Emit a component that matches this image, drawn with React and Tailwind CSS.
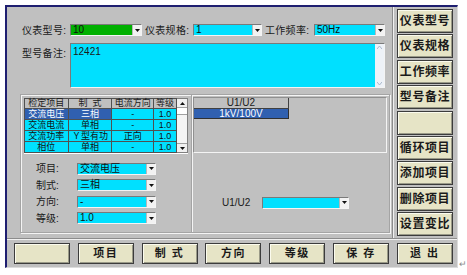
import React from 'react'

function DropArrow() {
  return (
    <div className="w-[9px] h-full bg-[#f2f2f2] border-l border-[#b8b8b8] flex items-center justify-center">
      <svg width="5" height="3" viewBox="0 0 5 3"><path d="M0 0h5L2.5 3z" fill="#111" /></svg>
    </div>
  )
}

function Select({ className, value }) {
  return (
    <div className={`flex h-[12px] border border-t-[#7a7a7a] border-l-[#7a7a7a] border-r-[#f4f4f4] border-b-[#f4f4f4] ${className}`}>
      <div className="flex-1 flex items-center pl-[2px] text-[10px] leading-none text-[#101010]">{value}</div>
      <DropArrow />
    </div>
  )
}

function Btn({ children, className = '' }) {
  return (
    <div className={`w-[56px] flex items-center justify-center bg-[#e6e4c6] border border-[#3c3c3c] shadow-[inset_1px_1px_0_#fbfbee,inset_-1px_-1px_0_#9a9a88] font-bold text-[#1a1a1a] whitespace-pre ${className}`}>
      {children}
    </div>
  )
}

const rows = [
  { item: '交流电压', mode: '三相', dir: '-', grade: '1.0', sel: true },
  { item: '交流电流', mode: '单相', dir: '-', grade: '1.0' },
  { item: '交流功率', mode: 'Ｙ型有功', dir: '正向', grade: '1.0' },
  { item: '相位', mode: '单相', dir: '-', grade: '1.0' },
]

const sideButtons = ['仪表型号', '仪表规格', '工作频率', '型号备注', '', '循环项目', '添加项目', '删除项目', '设置变比']
const bottomButtons = ['', '项目', '制 式', '方向', '等级', '保 存', '退 出']

export default function App() {
  return (
    <div className="relative w-[467px] h-[275px] overflow-hidden bg-white font-['Liberation_Sans','Noto_Sans_CJK_SC',sans-serif]">
      <div className="ml-[5px] mt-[5px] w-[453px] h-[263px] flex flex-col bg-[#c0c0c0] border-t-2 border-l-2 border-r border-b border-t-[#1e1e70] border-l-[#1e1e70] border-r-[#dcdcdc] border-b-[#dcdcdc]">
        <div className="flex h-[231px]">
          {/* main panel */}
          <div className="w-[385px] flex flex-col">
            <div className="flex items-center h-[12px] mt-[17px] pl-[15px] text-[10px] text-[#1a1a1a]">
              <span className="w-[48px] tracking-[0.3px]">仪表型号:</span>
              <Select className="w-[72px] bg-[#00b000]" value="10" />
              <span className="w-[48px] ml-[3px] tracking-[0.3px]">仪表规格:</span>
              <Select className="w-[69px] bg-[#00e0ff]" value="1" />
              <span className="w-[49px] ml-[3px] tracking-[0.3px]">工作频率:</span>
              <Select className="w-[71px] bg-[#00e0ff]" value="50Hz" />
            </div>

            <div className="flex mt-[7px] pl-[15px] text-[10px] text-[#1a1a1a]">
              <span className="w-[48px] pt-[3px] tracking-[0.3px]">型号备注:</span>
              <div className="flex w-[315px] h-[45px] bg-[#00e0ff] border border-t-[#7a7a7a] border-l-[#7a7a7a] border-r-[#f4f4f4] border-b-[#f4f4f4]">
                <div className="flex-1 pl-[2px] pt-[3px] text-[10px] leading-none">12421</div>
                <div className="w-[9px] h-full bg-[#eef2f8] flex flex-col justify-between items-center py-[2px]">
                  <svg width="5" height="3" viewBox="0 0 5 3"><path d="M0 3L2.5 0L5 3" fill="none" stroke="#a8b8cc" /></svg>
                  <svg width="5" height="3" viewBox="0 0 5 3"><path d="M0 0L2.5 3L5 0" fill="none" stroke="#a8b8cc" /></svg>
                </div>
              </div>
            </div>

            <div className="flex mt-[6px] ml-[13px] w-[370px] h-[139px] border border-[#a4a4a4] shadow-[inset_1px_1px_0_#f4f4f4,1px_1px_0_#f4f4f4]">
              {/* left group */}
              <div className="w-[171px] border-r border-[#a4a4a4] shadow-[1px_0_0_#f4f4f4] pl-[3px] pt-[3px]">
                <div className="flex w-[164px] border-b border-white">
                  <div className="w-[153px] text-[9px] leading-none border-t border-l border-[#505050]">
                    <div className="flex h-[10px] bg-[#c0c0c0] text-[#1a1a1a]">
                      <div className="w-[44px] flex items-center justify-center border-r border-b border-[#505050]">检定项目</div>
                      <div className="w-[44px] flex items-center justify-center border-r border-b border-[#505050] whitespace-pre">制  式</div>
                      <div className="w-[42px] flex items-center justify-center border-r border-b border-[#505050]">电流方向</div>
                      <div className="w-[23px] flex items-center justify-center border-r border-b border-[#505050]">等级</div>
                    </div>
                    {rows.map((r) => (
                      <div key={r.item} className="flex h-[11px] text-[#101010]">
                        <div className={`w-[44px] flex items-center justify-center border-r border-b border-[#505050] ${r.sel ? 'bg-[#3060b0] text-white' : 'bg-[#00e0ff]'}`}>{r.item}</div>
                        <div className={`w-[44px] flex items-center justify-center border-r border-b border-[#505050] ${r.sel ? 'bg-[#3060b0] text-white' : 'bg-[#00e0ff]'}`}>{r.mode}</div>
                        <div className="w-[42px] flex items-center justify-center border-r border-b border-[#505050] bg-[#00e0ff]">{r.dir}</div>
                        <div className="w-[23px] flex items-center justify-center border-r border-b border-[#505050] bg-[#00e0ff]">{r.grade}</div>
                      </div>
                    ))}
                  </div>
                  <div className="w-[11px] flex flex-col bg-[#f4f4f4] border-t border-r border-b border-[#808080]">
                    <div className="h-[9px] flex items-center justify-center bg-[#f0f0f0] border-b border-[#a0a0a0]">
                      <svg width="5" height="3" viewBox="0 0 5 3"><path d="M0 3h5L2.5 0z" fill="#111" /></svg>
                    </div>
                    <div className="h-[7px] bg-white border-b border-[#a0a0a0]" />
                    <div className="flex-1" />
                    <div className="h-[9px] flex items-center justify-center bg-[#f0f0f0] border-t border-[#a0a0a0]">
                      <svg width="5" height="3" viewBox="0 0 5 3"><path d="M0 0h5L2.5 3z" fill="#111" /></svg>
                    </div>
                  </div>
                </div>

                <div className="flex flex-col gap-[5.5px] mt-[9px] pl-[12px] text-[10px] text-[#1a1a1a]">
                  {[
                    ['项目:', '交流电压'],
                    ['制式:', '三相'],
                    ['方向:', '-'],
                    ['等级:', '1.0'],
                  ].map(([label, value]) => (
                    <div key={label} className="flex items-center h-[11px]">
                      <span className="w-[41px]">{label}</span>
                      <Select className="w-[79px] h-[11px] bg-[#00e0ff]" value={value} />
                    </div>
                  ))}
                </div>
              </div>

              {/* right group */}
              <div className="flex-1 flex flex-col">
                <div className="ml-[1px] mt-[2px] w-[194px] h-[56px] border border-t-[#909090] border-l-[#909090] border-r-[#f4f4f4] border-b-[#f4f4f4] text-[10px] leading-none">
                  <div className="w-[95px] h-[11px] flex items-center justify-center text-[#1a1a1a] border-r border-b border-[#404040]">U1/U2</div>
                  <div className="w-[95px] h-[10px] flex items-center justify-center bg-[#3060b0] text-white border-r border-b border-[#303030]">1kV/100V</div>
                </div>
                <div className="flex items-center mt-[42px] ml-[30px] text-[10px] text-[#1a1a1a]">
                  <span className="w-[40px]">U1/U2</span>
                  <Select className="w-[87px] bg-[#00e0ff]" value="" />
                </div>
              </div>
            </div>
          </div>

          {/* side buttons */}
          <div className="flex-1 flex flex-col gap-[1.4px] pl-[4px] pt-[2px] border-l border-[#8c8c8c] shadow-[inset_1px_0_0_#f0f0f0]">
            {sideButtons.map((t, i) => (
              <Btn key={i} className="h-[24px] text-[12px] tracking-[0.6px]">{t}</Btn>
            ))}
          </div>
        </div>

        {/* bottom buttons */}
        <div className="flex-1 flex gap-[7.8px] pl-[7px] pt-[4px] border-t border-[#8c8c8c] shadow-[inset_0_1px_0_#f0f0f0]">
          {bottomButtons.map((t, i) => (
            <Btn key={i} className="h-[21px] text-[11px] tracking-[1.5px]">{t}</Btn>
          ))}
        </div>
      </div>
      <span className="absolute left-[459px] top-[258px] text-[9px] text-[#8a8a8a]">↵</span>
    </div>
  )
}
